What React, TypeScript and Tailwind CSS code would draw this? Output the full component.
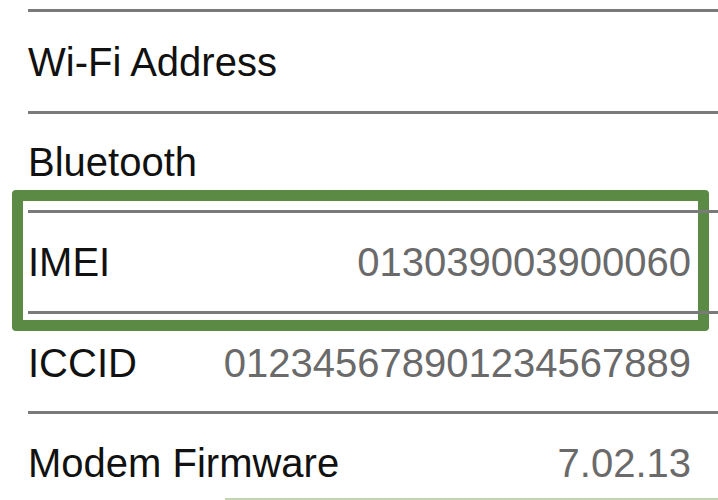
import React from "react";

const rows: { label: string; value?: string; h: string }[] = [
  { label: "Wi-Fi Address", h: "h-[102px]" },
  { label: "Bluetooth", h: "h-[99px]" },
  { label: "IMEI", value: "013039003900060", h: "h-[101px]" },
  { label: "ICCID", value: "012345678901234567889", h: "h-[100px]" },
  { label: "Modem Firmware", value: "7.02.13", h: "h-[100px]" },
];

export default function App() {
  return (
    <div
      className="relative w-[718px] h-[500px] overflow-hidden bg-white"
      style={{ fontFamily: '"Liberation Sans", Arial, sans-serif' }}
    >
      <div className="absolute left-[12px] top-[190px] w-[697px] h-[141px] rounded-[4px] border-[11px] border-[#5b8a45]" />
      <div className="absolute left-[225px] top-[498px] w-[493px] h-[2px] bg-[#c2d5b4]" />
      <div className="relative pt-[9px]">
        {rows.map((r) => (
          <div
            key={r.label}
            className={`flex items-center justify-between ${r.h} ml-[28px] pr-[27px] border-t-[3px] border-[#7a7a7a]`}
          >
            <span className="text-[40px] leading-none text-[#111]">{r.label}</span>
            {r.value && (
              <span className="text-[40px] leading-none text-[#6a6a6a]">{r.value}</span>
            )}
          </div>
        ))}
      </div>
    </div>
  );
}
